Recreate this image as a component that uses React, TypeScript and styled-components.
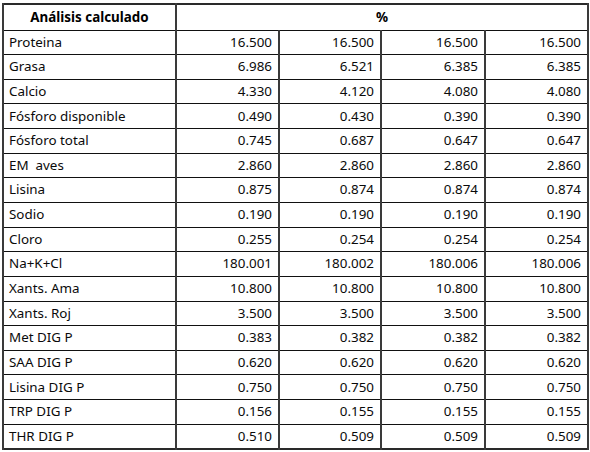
import React from "react";
import styled, { createGlobalStyle } from "styled-components";

const GlobalStyle = createGlobalStyle`
  html, body {
    margin: 0;
    padding: 0;
    background: #ffffff;
  }
  body {
    font-family: "Noto Sans", "Open Sans", Arial, sans-serif;
    color: #000;
  }
`;

const rows: [string, string, string, string, string][] = [
  ["Proteina", "16.500", "16.500", "16.500", "16.500"],
  ["Grasa", "6.986", "6.521", "6.385", "6.385"],
  ["Calcio", "4.330", "4.120", "4.080", "4.080"],
  ["Fósforo disponible", "0.490", "0.430", "0.390", "0.390"],
  ["Fósforo total", "0.745", "0.687", "0.647", "0.647"],
  ["EM  aves", "2.860", "2.860", "2.860", "2.860"],
  ["Lisina", "0.875", "0.874", "0.874", "0.874"],
  ["Sodio", "0.190", "0.190", "0.190", "0.190"],
  ["Cloro", "0.255", "0.254", "0.254", "0.254"],
  ["Na+K+Cl", "180.001", "180.002", "180.006", "180.006"],
  ["Xants. Ama", "10.800", "10.800", "10.800", "10.800"],
  ["Xants. Roj", "3.500", "3.500", "3.500", "3.500"],
  ["Met DIG P", "0.383", "0.382", "0.382", "0.382"],
  ["SAA DIG P", "0.620", "0.620", "0.620", "0.620"],
  ["Lisina DIG P", "0.750", "0.750", "0.750", "0.750"],
  ["TRP DIG P", "0.156", "0.155", "0.155", "0.155"],
  ["THR DIG P", "0.510", "0.509", "0.509", "0.509"],
];

const colWidths = [173, 103, 102, 104, 103];

const Sheet = styled.div`
  padding: 3px 0 0 2px;
`;

const Table = styled.table`
  border-collapse: collapse;
  table-layout: fixed;
  width: 585px;
  font-size: 13.4px;
  border: 2px solid #2a2a2a;
`;

const Col = styled.col<{ $w: number }>`
  width: ${({ $w }) => $w}px;
`;

const HeadRow = styled.tr`
  height: 26px;
`;

const Row = styled.tr`
  height: 24.65px;
`;

const HeadCell = styled.th`
  font-weight: 700;
  text-align: center;
  padding: 0 5px;
  border-left: 2px solid #3a3a3a;
  border-right: 2px solid #3a3a3a;
  border-bottom: 1px solid #111;
  white-space: nowrap;
`;

const Cell = styled.td<{ $num?: boolean }>`
  text-align: ${({ $num }) => ($num ? "right" : "left")};
  padding: ${({ $num }) => ($num ? "0 6px 0 0" : "0 0 0 5px")};
  border-left: 2px solid #3a3a3a;
  border-right: 2px solid #3a3a3a;
  border-top: 1px solid #111;
  border-bottom: 1px solid #111;
  white-space: pre;
  line-height: 1;
  color: #0a0a0a;
`;

export default function App() {
  return (
    <>
      <GlobalStyle />
      <Sheet>
        <Table>
          <colgroup>
            {colWidths.map((w, i) => (
              <Col key={i} $w={w} />
            ))}
          </colgroup>
          <thead>
            <HeadRow>
              <HeadCell>Análisis calculado</HeadCell>
              <HeadCell colSpan={4}>%</HeadCell>
            </HeadRow>
          </thead>
          <tbody>
            {rows.map((r) => (
              <Row key={r[0]}>
                <Cell>{r[0]}</Cell>
                {r.slice(1).map((v, i) => (
                  <Cell key={i} $num>
                    {v}
                  </Cell>
                ))}
              </Row>
            ))}
          </tbody>
        </Table>
      </Sheet>
    </>
  );
}
